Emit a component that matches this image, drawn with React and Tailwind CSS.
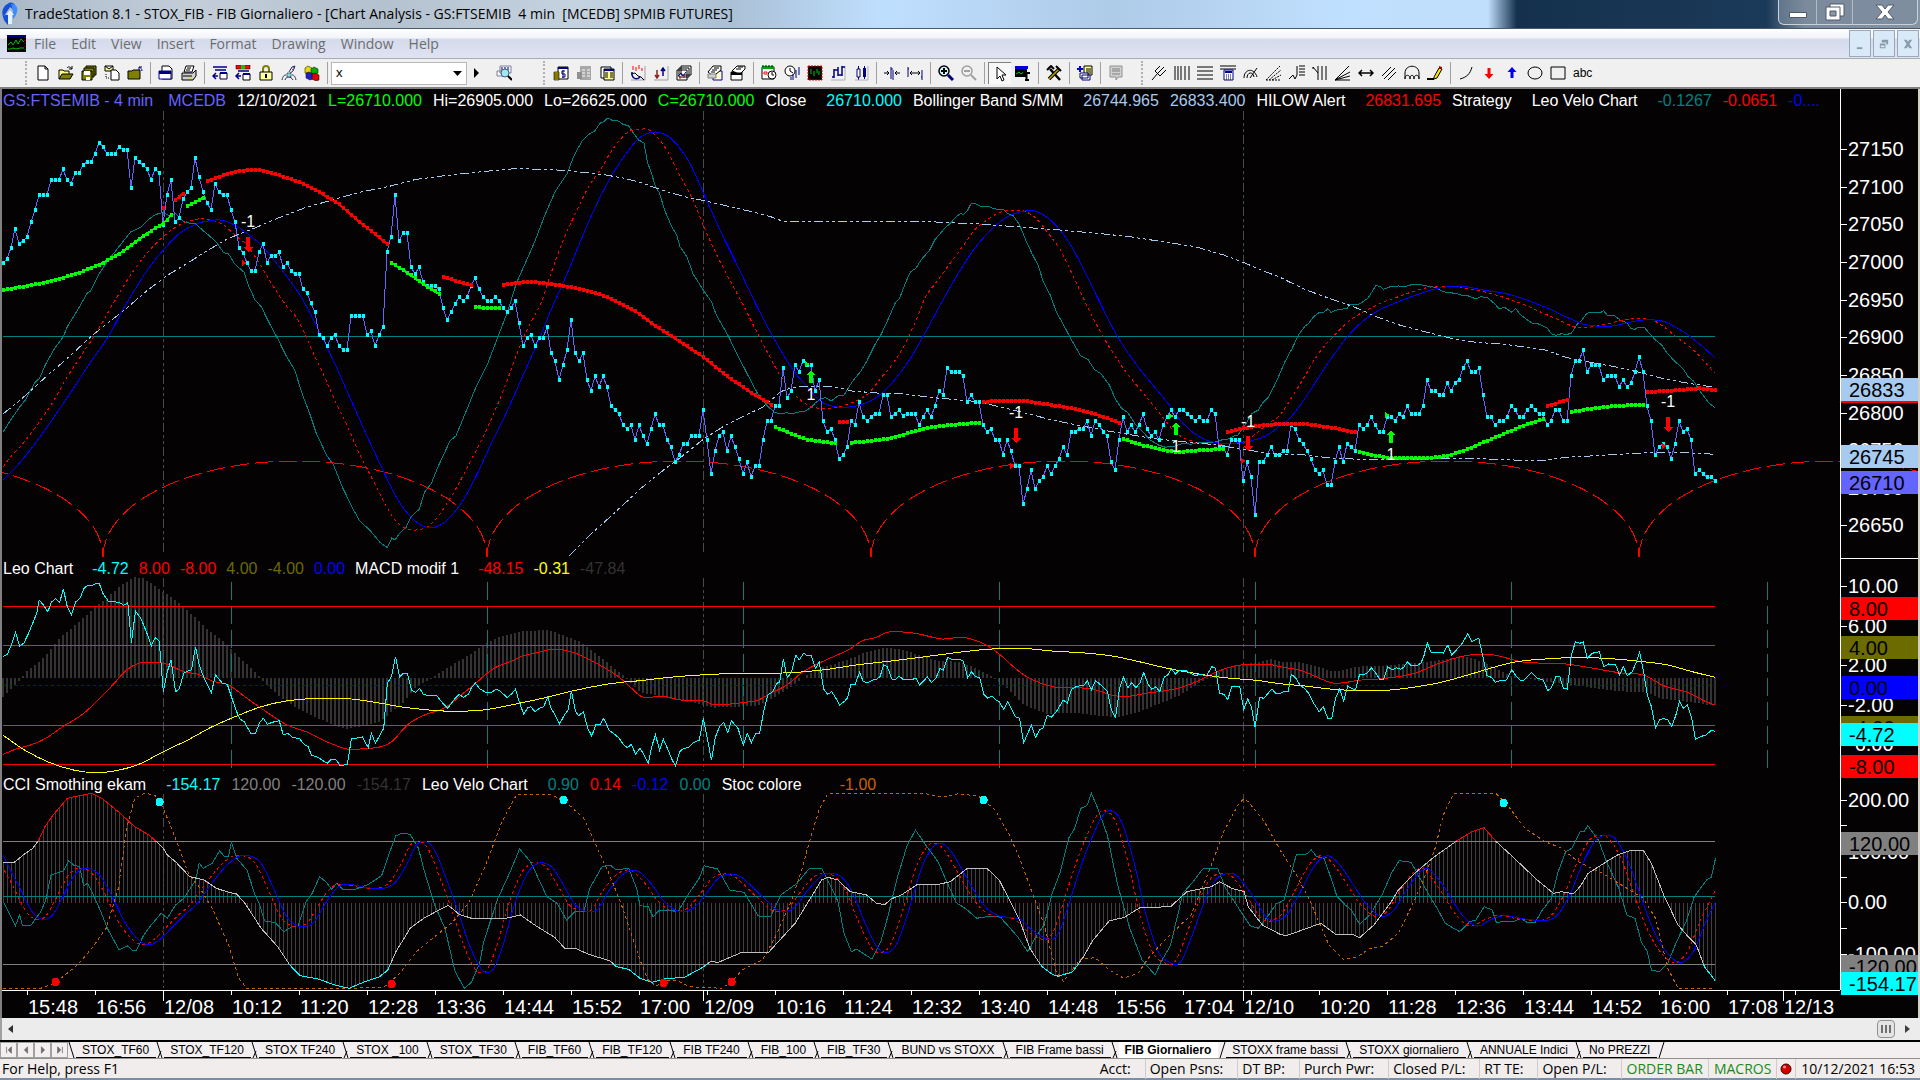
import clsx from "clsx";

// Series are stored in three sheets of 640px each, on a fine grid (2.45 x 3 units per pixel)
const read = (top, ...sheets) =>
  sheets.flatMap((sheet, i) =>
    sheet
      .split(" ")
      .filter(Boolean)
      .map((pair) => {
        const [x, y] = pair.split(",").map(Number);
        return [i * 640 + x / 2.45, top + y / 3];
      })
  );

const fmt = (n) => n.toFixed(1);
const polyline = (pts) => "M" + pts.map(([x, y]) => `${fmt(x)} ${fmt(y)}`).join("L");

// Catmull-Rom through the points
const curve = (pts) => {
  let d = `M${fmt(pts[0][0])} ${fmt(pts[0][1])}`;
  for (let i = 0; i < pts.length - 1; i++) {
    const a = pts[i - 1] || pts[i];
    const b = pts[i];
    const c = pts[i + 1];
    const e = pts[i + 2] || c;
    d += `C${fmt(b[0] + (c[0] - a[0]) / 6)} ${fmt(b[1] + (c[1] - a[1]) / 6)} ${fmt(c[0] - (e[0] - b[0]) / 6)} ${fmt(c[1] - (e[1] - b[1]) / 6)} ${fmt(c[0])} ${fmt(c[1])}`;
  }
  return d;
};

// One sample every 4px (one bar)
const sample = (pts) => {
  const out = [];
  let j = 0;
  for (let x = 3; x <= pts[pts.length - 1][0] + 1; x += 4) {
    if (x < pts[0][0] - 1) continue;
    while (j < pts.length - 2 && pts[j + 1][0] < x) j++;
    const [x0, y0] = pts[j];
    const [x1, y1] = pts[j + 1];
    out.push([x, y0 + ((y1 - y0) * (x - x0)) / (x1 - x0)]);
  }
  return out;
};

const closes = [
  459, 447, 413, 356, 402, 393, 380, 336, 300, 255, 255, 255, 210, 210, 210, 177, 210, 222, 189, 189, 165, 156, 156, 132,
  98, 110, 132, 132, 132, 110, 119, 119, 234, 143, 156, 165, 177, 210, 177, 189, 345, 255, 210, 336, 324, 267, 246, 234,
  143, 200, 246, 279, 300, 222, 246, 255, 255, 300, 336, 413, 428, 459, 483, 483, 426, 402, 459, 437, 437, 426, 471, 459,
  483, 492, 492, 538, 550, 580, 606, 675, 684, 708, 684, 675, 708, 720, 720, 618, 618, 618, 618, 675, 663, 708, 675, 651,
  426, 380, 255, 393, 369, 369, 471, 492, 471, 516, 528, 528, 528, 538, 594, 630, 606, 582, 561, 573, 561, 528, 504, 538,
  561, 573, 573, 561, 573, 594, 606, 594, 573, 639, 708, 684, 675, 708, 684, 684, 651, 729, 753, 810, 765, 720, 630, 729,
  753, 729, 810, 843, 798, 831, 798, 831, 888, 900, 912, 945, 957, 945, 990, 945, 978, 1002, 957, 912, 945, 945, 990,
  1011, 1056, 1035, 1002, 1002, 978, 978, 978, 900, 990, 1092, 1023, 978, 966, 1023, 978, 1011, 1047, 1092, 1056, 1101,
  1068, 1068, 990, 933, 933, 888, 888, 774, 864, 843, 765, 786, 752, 765, 765, 843, 810, 933, 966, 957, 990, 1047, 1035,
  1011, 933, 945, 876, 921, 933, 921, 912, 912, 855, 855, 921, 912, 900, 918, 912, 912, 912, 945, 921, 900, 921, 888, 843,
  855, 774, 786, 786, 786, 798, 876, 855, 876, 876, 945, 966, 957, 990, 990, 1035, 990, 1023, 1068, 1068, 1182, 1137,
  1080, 1137, 1113, 1101, 1068, 1092, 1068, 1047, 1011, 1035, 966, 966, 957, 957, 933, 978, 933, 945, 966, 978, 1056,
  1080, 990, 921, 966, 945, 966, 945, 912, 957, 978, 966, 990, 945, 921, 900, 921, 900, 900, 912, 921, 933, 921, 933, 933,
  900, 912, 1011, 1011, 1035, 990, 990, 990, 1113, 1056, 1101, 1215, 1056, 1056, 1035, 1011, 1035, 1035, 1023, 1023, 945,
  957, 990, 1002, 1023, 1047, 1080, 1092, 1080, 1125, 1125, 1056, 1011, 1056, 1002, 1011, 1023, 945, 957, 945, 921, 945,
  966, 966, 921, 921, 933, 912, 921, 888, 912, 912, 912, 888, 810, 843, 843, 855, 855, 819, 843, 819, 810, 774, 753, 786,
  786, 774, 855, 921, 921, 945, 933, 933, 921, 888, 900, 921, 921, 900, 888, 900, 912, 912, 945, 933, 900, 900, 933, 933,
  798, 753, 753, 720, 786, 765, 765, 765, 810, 798, 798, 798, 831, 810, 831, 819, 786, 741, 786, 888, 933, 1035, 1011,
  1002, 1011, 1047, 1002, 933, 966, 957, 990, 1092, 1080, 1092, 1101, 1101, 1113,
].map((y, i) => [3 + i * 4, 110 + y / 3]);

const velo = read(
  110,
  "8,965 25,932 47,893 62,870 85,818 97,805 112,762 135,713 155,680 165,650 190,600 214,549 222,543 240,497 265,450 282,425 298,400 320,366 345,352 362,330 380,314 400,307 415,318 430,310 450,335 465,340 480,342 498,362 520,385 532,400 548,428 560,432 575,462 598,487 610,530 625,570 640,590 660,640 682,690 700,735 722,780 740,850 760,915 775,970 800,1035 817,1065 840,1135 865,1197 880,1230 910,1266 930,1296 949,1313 960,1284 968,1290 980,1268 995,1252 1007,1220 1027,1198 1040,1147 1057,1120 1075,1065 1103,992 1117,978 1140,910 1165,835 1195,760 1220,680 1245,600 1265,520 1285,465 1310,395 1335,315 1360,245 1390,190 1405,140 1425,95 1440,75 1458,62 1470,40 1480,34 1489,24 1500,31 1515,33 1525,42 1540,48 1550,66 1565,91",
  "3,94 10,100 18,155 28,190 38,230 48,250 60,300 78,350 90,375 98,410 115,440 130,492 155,540 175,575 187,615 215,675 235,725 262,790 290,855 310,885 330,908 345,911 360,908 372,912 385,907 405,903 420,892 430,878 445,865 455,863 468,873 485,858 500,855 520,815 540,785 555,755 575,705 590,675 607,630 625,580 636,565 650,520 663,485 675,476 690,448 710,420 722,390 745,357 760,340 775,320 785,311 793,313 803,300 811,281 822,281 833,288 850,288 865,295 880,300 890,298 900,310 915,318 930,345 945,390 960,430 975,465 988,515 1005,555 1020,605 1040,650 1055,685 1080,738 1097,748 1113,778 1130,792 1150,825 1165,868 1180,895 1195,908 1215,945 1235,970 1250,990 1270,1005 1287,1012 1310,1008 1330,1000 1350,1003 1365,998 1385,996 1405,998 1425,990 1440,988 1455,978 1465,975 1480,950 1500,910 1515,900 1525,880 1540,860 1553,830",
  "0,790 12,755 30,715 45,675 60,650 70,640 82,620 95,608 108,606 117,596 125,607 140,600 165,595 172,582 180,583 195,582 215,565 235,527 245,529 254,538 270,530 290,528 310,529 325,523 345,524 360,528 380,532 400,545 415,548 430,550 445,556 460,557 480,567 492,560 508,563 525,580 537,597 550,592 568,607 577,595 588,613 600,624 618,640 632,641 655,655 665,671 677,676 690,671 700,674 714,670 728,643 740,630 752,610 765,607 785,608 793,602 802,616 820,617 835,632 850,638 860,656 870,658 878,652 893,653 905,670 920,690 935,705 950,732 970,757 988,777 1000,800 1013,813 1030,845 1050,878 1066,893"
);

const veloRed = read(
  110,
  "8,1070 30,1035 60,995 95,938 130,875 165,800 200,735 240,660 280,575 320,495 360,430 400,380 440,345 480,328 510,328 545,343 580,380 605,405 630,450 665,520 700,585 725,620 750,680 770,735 795,800 820,870 850,945 880,1030 905,1090 930,1150 950,1197 975,1240 1000,1257 1020,1260 1045,1252 1070,1225 1095,1180 1120,1130 1150,1060 1180,990 1210,910 1240,820 1270,720 1295,650 1325,580 1350,490 1380,390 1410,310 1440,235 1470,180 1500,120 1530,75 1550,60",
  "0,58 20,59 45,85 70,130 95,190 130,270 160,360 190,440 220,510 255,590 290,675 320,745 350,810 380,855 410,885 440,895 470,895 500,886 530,872 560,850 590,805 620,760 650,700 680,620 700,560 730,510 760,460 790,410 820,360 850,330 880,308 910,301 940,303 970,325 1000,370 1030,420 1060,495 1100,600 1135,680 1170,750 1200,800 1240,860 1280,920 1310,965 1345,990 1390,1003 1430,1002 1470,1000 1490,990 1510,970 1540,940",
  "0,915 30,860 60,800 95,730 130,680 170,632 210,602 250,578 290,560 330,543 370,531 415,529 460,537 500,545 550,563 600,585 640,607 680,628 720,650 750,653 800,642 850,628 880,625 910,629 940,650 970,680 1010,717 1040,755 1066,790"
);

const veloBlue = read(
  110,
  "8,1109 40,1070 80,1010 130,925 180,835 220,760 265,680 305,590 340,520 370,465 400,420 440,370 480,342 520,331 545,331 575,345 600,365 640,405 665,440 700,495 740,565 780,660 820,760 860,870 900,980 940,1085 975,1170 1010,1225 1040,1250 1070,1250 1100,1225 1135,1170 1170,1090 1200,1010 1240,910 1280,800 1320,690 1350,600 1390,490 1420,400 1455,300 1490,215 1520,155 1550,105",
  "0,82 25,68 50,68 80,90 120,155 165,275 200,370 240,470 285,585 330,690 375,780 410,830 440,872 470,888 500,892 540,885 580,862 620,815 660,750 700,665 740,575 780,490 820,415 860,360 900,320 940,304 970,304 1010,335 1050,395 1090,485 1130,585 1170,680 1220,770 1260,830 1300,890 1330,940 1370,980 1410,998 1470,998 1520,985 1550,965",
  "0,945 20,930 50,885 80,830 120,755 165,680 200,637 240,602 290,575 340,552 380,537 420,529 460,531 500,541 550,550 600,568 660,597 700,620 740,641 780,649 820,647 860,636 900,629 940,634 970,652 1000,675 1040,715 1066,744"
);

const bandTop = read(
  110,
  "8,911 50,870 110,803 165,745 230,672 310,595 360,542 410,496 460,459 510,420 560,385 620,356 680,325 750,292 820,268 880,247 950,230 1020,208 1090,197 1180,185 1260,176 1340,178 1400,183 1480,194 1530,205",
  "0,217 60,243 110,260 165,274 220,290 280,307 320,320 350,334 690,334 760,338 830,342 920,350 1020,359 1120,370 1200,380 1290,397 1360,410 1430,435 1480,458 1530,484",
  "0,502 60,538 120,565 180,590 240,622 290,644 350,664 420,685 480,697 550,703 600,711 650,720 700,742 760,757 820,770 880,787 940,806 1000,820 1066,832"
);

const bandLow = read(
  110,
  "1395,1337 1450,1270 1500,1215 1545,1164",
  "0,1137 60,1078 100,1042 155,988 210,945 260,915 300,892 345,845 370,833 410,829 470,829 520,843 580,849 640,851 720,863 830,875 880,890 940,908 1010,930 1080,947 1150,964 1200,974 1260,986 1330,995 1400,1003 1470,1016 1530,1028",
  "0,1034 60,1035 130,1045 200,1048 320,1048 450,1045 530,1048 590,1051 650,1051 700,1042 760,1038 840,1032 900,1028 950,1026 1000,1028 1066,1033"
);

const hilowGreen = [
  read(110, "8,540 50,531 100,520 150,505 200,485 250,460 300,425 340,388 370,362 400,340 420,315"),
  read(110, "459,288 498,263"),
  read(110, "959,459 1000,490 1040,525 1076,552"),
  read(110, "1164,591 1184,594 1223,594"),
  read(110, "", "331,951 370,972 410,989 450,996 480,1000"),
  read(110, "", "518,998 560,994 610,986 660,968 710,952 760,945 831,938"),
  read(110, "", "1184,987 1230,1006 1280,1020 1320,1026 1370,1021 1429,1016"),
  read(110, "", "", "194,1025 230,1037 270,1044 370,1044 410,1037 450,1022 500,996 550,970 600,945 648,926"),
  read(110, "", "", "714,906 760,896 820,888 895,884"),
];

const hilowRed = [
  read(110, "400,295 402,295"),
  read(110, "429,270 449,250"),
  read(110, "508,213 540,198 580,184 620,179 640,180 680,195 730,215 780,245 830,282 880,335 949,402"),
  read(110, "1086,500 1120,515 1155,526"),
  read(
    110,
    "1233,524 1262,519 1300,515 1370,525 1440,542 1500,567 1566,611",
    "40,650 92,690 157,743 212,798 272,848 322,885"
  ),
  read(110, "", "488,936 508,936"),
  read(110, "", "841,876 870,872 940,873 1000,884 1060,896 1120,915 1174,938"),
  read(110, "", "1439,966 1490,952 1530,945", "8,942 60,942 120,952 188,968"),
  read(110, "", "", "655,888 680,878 708,868"),
  read(110, "", "", "900,846 950,843 1000,838 1030,835 1066,840"),
];

const leo = read(
  555,
  "8,304 18,298 28,270 38,232 48,273 58,265 68,240 80,205 90,175 96,135 106,150 117,170 126,142 136,130 146,143 155,102 165,155 175,180 186,140 196,130 206,100 214,92 224,93 236,84 243,85 252,115 265,138 275,140 292,142 303,151 313,143 322,263 332,168 345,190 358,228 371,272 380,248 390,258 400,410 410,350 419,316 430,410 439,402 450,355 460,348 469,345 479,276 488,330 500,370 518,412 528,360 545,385 557,388 567,425 578,465 588,492 598,500 615,536 626,536 635,505 645,490 655,508 667,502 684,497 694,540 705,535 718,548 733,550 745,568 755,575 763,600 780,608 802,625 812,612 824,615 833,632 851,628 861,552 888,546 902,578 910,535 920,565 931,540 940,520 949,385 959,365 969,305 979,366 988,354 998,354 1008,405 1018,412 1028,400 1037,418 1050,422 1070,422 1085,445 1097,460 1113,433 1125,418 1135,427 1148,418 1155,398 1165,384 1174,400 1190,412 1205,411 1216,403 1225,408 1243,428 1255,415 1263,403 1272,440 1283,478 1293,458 1300,455 1311,470 1321,460 1332,455 1342,425 1350,460 1360,480 1371,506 1383,480 1392,465 1400,408 1410,470 1418,482 1429,470 1440,520 1450,543 1460,508 1470,510 1479,490 1492,525 1505,537 1517,550 1528,570 1537,578 1547,568 1557,597",
  "0,580 10,600 20,625 30,570 38,540 48,585 57,552 68,583 78,612 87,634 97,590 107,580 118,578 130,563 145,556 155,490 165,550 175,615 185,545 195,515 205,502 215,533 224,497 240,520 253,570 263,535 273,563 283,536 293,535 303,470 313,420 325,410 335,385 342,382 351,312 361,368 371,352 382,300 390,315 401,295 410,302 420,302 430,340 439,322 450,403 460,418 470,410 480,430 489,450 500,440 508,430 517,388 527,388 538,352 547,380 558,383 570,375 580,372 588,365 597,330 606,335 617,372 625,375 635,363 645,374 657,375 670,372 676,370 685,390 695,378 704,365 714,383 725,370 735,340 743,345 754,307 765,314 785,314 792,318 803,368 812,350 822,365 832,368 842,417 852,430 862,423 872,435 880,440 891,463 901,440 910,462 920,485 930,490 940,563 950,535 959,510 969,547 979,525 988,518 998,480 1008,487 1020,470 1037,435 1047,445 1057,403 1067,396 1075,393 1087,392 1096,377 1106,405 1116,377 1127,388 1145,408 1155,465 1165,487 1175,400 1184,365 1195,398 1205,383 1215,398 1225,383 1234,353 1245,388 1254,403 1264,395 1273,410 1285,365 1293,360 1302,340 1312,358 1322,345 1335,345 1348,355 1360,362 1372,358 1388,362 1401,335 1410,340 1420,415 1430,418 1440,433 1450,395 1460,393 1469,393 1479,463 1489,432 1498,455 1507,517 1518,427 1528,430 1537,418 1548,402 1558,415",
  "0,415 10,410 20,410 28,358 38,368 50,392 60,400 70,415 80,440 96,470 106,455 117,490 127,490 136,430 146,403 156,437 166,393 175,400 185,405 195,358 205,360 215,352 224,338 235,355 245,374 254,372 264,335 275,345 285,338 295,343 303,337 312,320 322,332 335,332 345,325 352,305 361,263 370,292 400,294 411,270 421,300 432,285 445,268 460,236 470,260 487,250 497,305 507,362 518,367 528,382 540,376 555,375 568,345 580,365 590,377 598,375 616,352 630,370 645,375 656,407 665,398 676,365 685,363 694,400 704,402 714,300 724,260 735,265 743,260 753,310 765,295 782,290 793,335 805,327 822,328 832,360 841,335 851,362 863,350 872,325 881,292 890,345 900,420 910,455 920,518 930,495 940,490 950,495 960,514 970,480 979,438 988,460 998,450 1008,485 1018,553 1030,545 1043,540 1058,525 1066,530"
);

const macdBars = read(
  555,
  "8,425 28,400 50,375 60,355 80,335 110,305 150,245 190,205 230,160 270,120 300,88 331,66 350,70 370,85 400,110 430,135 470,178 510,225 550,262 590,310 630,358 650,385 690,430 730,460 780,490 820,512 851,522 890,512 930,500 960,470 990,440 1020,395 1060,368 1100,335 1150,300 1190,265 1230,243 1280,229 1340,224 1380,240 1420,260 1460,295 1500,335 1530,365",
  "0,412 40,420 90,435 140,445 180,458 230,455 290,452 330,425 370,395 410,360 450,335 500,318 550,293 600,278 640,282 680,298 730,318 780,320 820,338 860,362 900,400 940,450 1000,478 1060,472 1110,480 1170,487 1220,472 1270,447 1320,422 1370,385 1410,355 1460,330 1510,322 1550,312",
  "0,320 40,320 80,330 130,350 190,335 250,332 310,326 380,318 420,310 460,306 490,318 520,335 560,360 600,370 640,378 700,388 750,395 800,405 850,410 900,412 930,430 960,435 1000,440 1040,448 1066,450"
);

const macdRed = read(
  555,
  "8,598 40,582 80,568 115,548 150,518 200,480 240,435 280,385 310,345 340,325 380,322 410,328 450,350 485,358 520,378 560,390 600,425 640,460 700,508 750,530 800,560 850,582 890,581 930,576 960,560 1000,508 1040,480 1090,458 1140,410 1165,385 1210,340 1250,320 1280,303 1320,292 1355,283 1400,290 1450,318 1500,352 1530,380",
  "0,422 20,427 60,424 100,435 155,438 180,449 220,447 260,442 290,435 320,415 360,390 400,350 450,318 510,285 545,257 580,247 605,232 635,230 680,236 740,252 790,247 840,265 880,297 910,330 950,367 1010,395 1060,397 1110,403 1155,420 1190,425 1240,415 1310,402 1360,382 1410,352 1460,332 1500,329 1540,328",
  "0,335 50,346 90,366 135,385 200,375 260,370 330,355 390,325 450,303 490,298 530,301 590,320 650,325 700,327 760,338 830,353 890,360 940,392 1000,413 1040,438 1066,450"
);

const macdYellow = read(
  555,
  "8,541 60,585 120,622 180,645 230,653 280,648 340,628 400,590 460,555 520,515 580,483 640,455 700,438 760,431 850,431 910,440 980,455 1060,466 1120,469 1190,464 1260,448 1340,427 1410,406 1480,389 1530,381",
  "0,377 80,366 160,359 240,355 350,354 440,346 530,330 630,316 730,300 830,285 900,280 950,281 1010,288 1100,295 1170,306 1240,325 1300,342 1380,359 1440,369 1510,376",
  "0,386 60,393 130,403 200,407 260,406 320,398 390,383 460,360 520,338 580,320 650,312 740,307 830,313 890,320 950,330 1010,350 1066,367"
);

const cci = read(
  555,
  "8,922 35,922 60,897 80,880 95,855 110,815 130,780 165,730 195,722 225,715 250,730 290,770 330,815 365,840 385,862 400,880 410,900 430,920 465,965 500,975 530,1000 560,1012 580,1017 600,1045 640,1120 680,1175 710,1230 735,1262 780,1272 820,1290 855,1300 890,1282 930,1265 950,1245 970,1190 1005,1120 1040,1088 1098,1051 1125,1078 1160,1092 1240,1090 1275,1080 1310,1110 1360,1148 1385,1182 1410,1180 1440,1197 1495,1218 1510,1235 1540,1243",
  "0,1270 30,1282 60,1272 110,1266 150,1240 175,1218 190,1223 250,1192 315,1192 380,1105 420,1025 445,975 460,967 485,975 515,1010 555,1020 580,1045 600,1049 615,1032 640,1020 680,988 725,990 760,980 800,942 850,940 880,975 905,1035 930,1095 955,1180 985,1235 1010,1258 1025,1264 1060,1250 1085,1208 1110,1155 1150,1097 1185,1088 1225,1058 1300,1055 1340,1010 1400,995 1420,980 1450,1000 1480,1010 1490,1055 1525,1110",
  "0,1138 15,1142 55,1125 100,1105 135,1137 175,1137 195,1148 230,1110 270,1045 290,1005 330,955 375,908 430,860 470,830 500,818 530,860 570,905 630,975 670,1015 690,1010 718,1016 735,995 755,955 800,920 830,898 860,886 890,886 910,925 940,1020 975,1110 1000,1145 1020,1170 1040,1235 1066,1277"
);

const fastVelo = read(
  555,
  "8,1040 38,1112 48,1080 55,1112 75,1112 100,1070 112,1035 125,960 155,948 168,917 180,930 195,935 205,992 215,985 240,1050 265,1125 292,1185 312,1172 325,1187 335,1185 350,1145 365,1118 395,1075 410,1090 430,1050 450,1030 480,975 488,925 498,940 520,925 538,887 550,905 560,903 567,862 580,910 605,945 625,1020 635,1045 648,1098 675,1103 695,1130 715,1115 730,1112 750,1040 765,1015 783,965 800,982 812,1003 825,985 840,1003 865,1005 900,990 935,962 955,890 970,842 985,835 1005,838 1025,880 1040,950 1065,1050 1090,1120 1115,1250 1138,1300 1155,1282 1175,1225 1185,1160 1220,1030 1250,950 1273,882 1300,920 1340,1025 1365,1045 1388,1095 1408,1070 1430,1070 1445,1000 1475,935 1495,930 1510,945 1540,940 1560,1000",
  "0,1052 20,1055 32,1085 48,1065 95,1065 120,1015 145,970 157,932 190,942 220,1005 255,1012 290,1083 320,1085 345,1020 385,985 415,940 445,940 470,1000 485,1040 500,1135 518,1190 530,1182 568,1212 590,1160 607,1085 630,970 655,870 675,825 700,870 730,920 755,990 775,1043 800,1063 825,1090 850,1085 880,1083 900,1110 925,1145 950,1190 970,1145 990,1110 1010,1015 1030,950 1050,850 1065,820 1080,760 1095,752 1106,715 1120,755 1145,840 1170,990 1200,1120 1230,1215 1262,1260 1275,1225 1300,1170 1330,1015 1355,980 1380,940 1415,940 1435,1000 1480,1085 1495,1112 1515,1120 1540,1080 1560,1045",
  "0,1042 10,1035 25,965 40,900 65,897 77,885 90,905 108,910 125,970 140,1025 160,1050 175,1065 195,1108 220,1080 250,1020 275,950 292,917 312,920 322,923 345,975 365,1020 385,1060 405,1105 440,1130 465,1100 480,1095 500,1055 520,1065 530,1102 575,1098 590,1090 605,1102 625,1103 640,1070 665,1030 680,955 700,890 715,880 735,830 745,830 754,812 780,855 800,920 830,1000 850,1080 870,1090 885,1160 900,1190 910,1245 930,1250 950,1225 970,1165 995,1100 1015,1025 1045,975 1057,967 1067,910"
);

const fastBlue = read(
  555,
  "8,900 25,945 45,990 65,1040 85,1080 110,1094 130,1078 150,1035 175,975 195,945 215,940 240,955 260,990 285,1050 310,1110 340,1155 365,1170 390,1155 420,1120 450,1082 480,1050 510,1000 545,945 580,907 610,902 640,925 670,1000 700,1080 720,1107 745,1115 770,1100 800,1040 825,1000 850,987 900,998 940,1000 970,980 1000,920 1020,870 1045,860 1065,885 1090,960 1120,1060 1150,1170 1175,1235 1190,1252 1210,1240 1235,1160 1260,1050 1290,960 1310,930 1330,923 1355,940 1385,1000 1410,1050 1440,1070 1465,1062 1490,1010 1520,965 1545,946",
  "0,952 30,990 60,1040 95,1069 130,1060 160,1020 190,972 220,957 250,968 300,1025 330,1060 355,1070 380,1055 415,1000 445,962 470,955 495,968 520,1010 550,1100 580,1175 605,1193 630,1165 660,1060 690,940 715,880 735,865 760,885 790,945 820,1010 850,1060 880,1083 930,1092 960,1125 1000,1153 1025,1135 1050,1050 1080,935 1110,840 1135,780 1155,768 1180,800 1210,920 1240,1080 1270,1190 1300,1224 1325,1220 1350,1150 1380,1050 1410,975 1440,955 1465,965 1500,1020 1530,1080 1550,1098",
  "0,1094 20,1075 50,1010 80,940 105,907 125,905 150,935 180,990 210,1045 240,1080 260,1082 280,1065 310,1005 340,955 360,940 380,960 410,1010 440,1070 470,1107 490,1112 515,1095 550,1082 600,1092 650,1097 680,1080 710,1020 740,930 770,860 795,841 820,850 850,910 880,1010 910,1110 940,1180 970,1218 990,1220 1015,1185 1040,1110 1067,1040"
);
const fastRed = fastBlue.map(([x, y]) => [x - 6, y]).filter(([x]) => x > 3).concat([[1715, 891]]);

const stoc = read(
  555,
  "8,1300 100,1300 135,1283 190,1230 225,1180 260,1120 290,1000 310,820 330,730 355,714 380,722 400,760 430,850 460,950 490,1000 520,1060 560,1170 585,1270 605,1300 850,1300 940,1297 980,1255 1020,1190 1060,1150 1110,1100 1150,1040 1190,930 1230,800 1265,720 1350,718 1390,745 1430,790 1460,870 1490,950 1520,1040 1545,1130",
  "0,1215 20,1275 40,1293 60,1278 90,1276 120,1295 200,1300 225,1280 250,1245 300,1215 330,1150 370,1040 395,950 415,860 440,760 460,716 700,716 740,726 780,716 830,724 870,765 905,840 930,910 960,1010 990,1110 1020,1250 1038,1280 1055,1250 1080,1212 1115,1208 1150,1245 1185,1270 1220,1255 1245,1210 1290,1150 1350,1080 1400,930 1430,830 1465,750 1478,733 1490,740 1530,800",
  "0,885 40,960 75,1040 95,1100 120,1170 155,1213 190,1205 220,1180 250,1175 290,1135 320,1060 350,980 380,880 400,780 425,716 530,716 560,755 600,820 650,860 690,880 730,920 790,955 850,1000 890,1030 920,1090 950,1240 975,1300 1066,1300"
);

const signals = [
  { x: 248, dir: "down", arrow: 237, label: 227, tip: [244, 263] },
  { x: 811, dir: "up", arrow: 370, label: 400, tip: [807, 364] },
  { x: 1016, dir: "down", arrow: 428, label: 418, tip: [1012, 466] },
  { x: 1176, dir: "up", arrow: 422, label: 452, tip: [1171, 416] },
  { x: 1248, dir: "down", arrow: 436, label: 427, tip: [1243, 461] },
  { x: 1391, dir: "up", arrow: 430, label: 460, tip: [1387, 415] },
  { x: 1668, dir: "down", arrow: 417, label: 407, tip: [1664, 446] },
];

const days = [163.5, 703.5, 1243.5];
const cusps = [-281, 103, 487, 871, 1255, 1639];

const priceLegend = [
  ["GS:FTSEMIB - 4 min", "text-[#6464ff] pr-1"],
  ["MCEDB", "text-[#6464ff]"],
  ["12/10/2021", "text-white"],
  ["L=26710.000", "text-[#00ff00]"],
  ["Hi=26905.000", "text-white"],
  ["Lo=26625.000", "text-white"],
  ["C=26710.000", "text-[#00ff00]"],
  ["Close", "text-white pr-[9px]"],
  ["26710.000", "text-[#00ffff]"],
  ["Bollinger Band S/MM", "text-white pr-[9px]"],
  ["26744.965", "text-[#a6caf0]"],
  ["26833.400", "text-[#a6caf0]"],
  ["HILOW Alert", "text-white pr-[9px]"],
  ["26831.695", "text-[#ff0000]"],
  ["Strategy", "text-white pr-[9px]"],
  ["Leo Velo Chart", "text-white pr-[9px]"],
  ["-0.1267", "text-[#008080]"],
  ["-0.0651", "text-[#ff0000]"],
  ["-0....", "text-[#0000ff]"],
];

const leoLegend = [
  ["Leo Chart", "text-white pr-[9px]"],
  ["-4.72", "text-[#00ffff]"],
  ["8.00", "text-[#ff0000]"],
  ["-8.00", "text-[#ff0000]"],
  ["4.00", "text-[#6b6b00]"],
  ["-4.00", "text-[#6b6b00]"],
  ["0.00", "text-[#0000ff]"],
  ["MACD modif 1", "text-white pr-[9px]"],
  ["-48.15", "text-[#ff0000]"],
  ["-0.31", "text-[#ffff00]"],
  ["-47.84", "text-[#333333]"],
];

const cciLegend = [
  ["CCI Smothing ekam", "text-white pr-[9px]"],
  ["-154.17", "text-[#00ffff]"],
  ["120.00", "text-[#808080]"],
  ["-120.00", "text-[#808080]"],
  ["-154.17", "text-[#333333]"],
  ["Leo Velo Chart", "text-white pr-[9px]"],
  ["0.90", "text-[#008080]"],
  ["0.14", "text-[#ff0000]"],
  ["-0.12", "text-[#0000ff]"],
  ["0.00", "text-[#008080]"],
  ["Stoc colore", "text-white pr-[27px]"],
  ["-1.00", "text-[#c86400]"],
];

const times = [
  [27, "15:48"], [95, "16:56"], [163, "12/08", 1], [231, "10:12"], [299, "11:20"], [367, "12:28"], [435, "13:36"],
  [503, "14:44"], [571, "15:52"], [639, "17:00"], [703, "12/09", 1], [707, ""], [775, "10:16"], [843, "11:24"],
  [911, "12:32"], [979, "13:40"], [1047, "14:48"], [1115, "15:56"], [1183, "17:04"], [1243, "12/10", 1], [1251, ""],
  [1319, "10:20"], [1387, "11:28"], [1455, "12:36"], [1523, "13:44"], [1591, "14:52"], [1659, "16:00"], [1727, "17:08"],
  [1783, "12/13", 1], [1795, ""],
];

const axisTicks = [
  [149, "27150"], [187, "27100"], [224, "27050"], [262, "27000"], [300, "26950"], [337, "26900"], [375, "26850"],
  [413, "26800"], [450, "26750"], [488, "26700"], [525, "26650"], [586, "10.00"], [626, "6.00"], [665, "2.00"],
  [705, "-2.00"], [744, "-6.00"], [800, "200.00"], [825, ""], [852, "100.00"], [877, ""], [902, "0.00"], [928, ""],
  [954, "-100.00"],
];

const axisBoxes = [
  [378, "26833", "#a6caf0"], [445, "26745", "#a6caf0"], [471, "26710", "#6464ff"], [597, "8.00", "#ff0000"],
  [636, "4.00", "#6b6b00"], [676, "0.00", "#0000ff"], [716, "-4.00", "#6b6b00"], [723, "-4.72", "#00ffff"],
  [755, "-8.00", "#ff0000"], [832, "120.00", "#808080"], [955, "-120.00", "#808080"], [972, "-154.17", "#00ffff"],
];

const Legend = ({ items, className }) => (
  <div className={clsx("flex shrink-0 items-center overflow-hidden whitespace-nowrap pl-px pt-0.5 text-base", className)}>
    {items.map(([text, color], i) => (
      <span key={i} className={color}>{text}</span>
    ))}
  </div>
);

const Plot = ({ top, height, label, children }) => (
  <svg
    role="img"
    aria-label={label}
    className="block min-h-0 w-full flex-1 overflow-visible"
    viewBox={`2 ${top} 1838 ${height}`}
    preserveAspectRatio="none"
    fill="none"
    shapeRendering="crispEdges"
  >
    {children}
  </svg>
);

const DayLines = ({ from, to }) => (
  <path d={days.map((x) => `M${x} ${from}V${to}`).join("")} stroke="#4a4a4a" strokeDasharray="9 3 3 3 3 3" />
);

const Dots = ({ runs, color }) =>
  runs.map((run, i) => {
    const dots = sample(run);
    return (
      <g key={i} fill={color}>
        <path d={polyline(dots)} stroke={color} strokeWidth="2" fill="none" />
        {dots.map(([x, y]) => (
          <rect key={x} x={x - 1} y={Math.round(y) - 2} width="3" height="4" />
        ))}
      </g>
    );
  });

const Signal = ({ x, dir, arrow, label, tip }) => {
  const color = dir === "up" ? "#00ff00" : "#ff0000";
  return (
    <g>
      <path
        d={
          dir === "up"
            ? `M${x} ${arrow}l-4 5h2v8h4v-8h2z`
            : `M${x - 2} ${arrow}h4v10h3l-5 5l-5-5h3z`
        }
        fill={color}
      />
      <path d={`M${tip[0] - 2} ${tip[1] - 3}l5 3l-5 3z`} fill={color} />
      <text x={x} y={label} fill="#fff" fontSize="16" textAnchor="middle">{dir === "up" ? "1" : "-1"}</text>
    </g>
  );
};

const PricePane = () => (
  <Plot top={111} height={447} label="Price">
    <DayLines from={111} to={555} />
    <path d="M3 336.500H1715" stroke="#008080" />
    <path
      d={cusps.map((x) => `M${x} 557A192 96 0 0 1 ${x + 384} 557`).join("")}
      stroke="#ff0000"
      strokeDasharray="18 6"
    />
    <path d={polyline(velo)} stroke="#008080" />
    <path d={curve(veloRed)} stroke="#ff0000" strokeDasharray="3 3" />
    <path d={curve(veloBlue)} stroke="#0000ff" />
    <path d={polyline(bandTop)} stroke="#a6caf0" strokeDasharray="9 3 3 3 3 3" />
    <path d={polyline(bandLow)} stroke="#a6caf0" strokeDasharray="9 3 3 3 3 3" />
    <path d={polyline(closes)} stroke="#6464ff" />
    {closes.map(([x, y]) => (
      <rect key={x} x={x - 1} y={Math.round(y) - 2} width="3" height="4" fill="#00ffff" />
    ))}
    <Dots runs={hilowGreen} color="#00ff00" />
    <Dots runs={hilowRed} color="#ff0000" />
    {signals.map((s) => (
      <Signal key={s.x} {...s} />
    ))}
  </Plot>
);

const LeoPane = () => (
  <Plot top={578} height={196} label="Leo Chart and MACD">
    <path d={sample(macdBars).map(([x, y]) => `M${x} 677.500V${fmt(y)}`).join("")} stroke="#333" strokeWidth="2" />
    <DayLines from={578} to={771} />
    <path
      d={[231.5, 487.5, 743.5, 999.5, 1255.5, 1511.5, 1767.5].map((x) => `M${x} 582V768`).join("")}
      stroke="#008080"
      strokeDasharray="18 6"
    />
    <path d="M3 606.500H1715M3 764.500H1715" stroke="#ff0000" />
    <path d="M3 645.500H1715M3 725.500H1715" stroke="#6b6b00" />
    <path d="M3 685.500H1715" stroke="#0000ff" strokeDasharray="3 3" />
    <path d={curve(macdRed)} stroke="#ff0000" />
    <path d={curve(macdYellow)} stroke="#ffff00" />
    <path d={polyline(leo)} stroke="#00ffff" />
  </Plot>
);

const CciPane = () => (
  <Plot top={794} height={196} label="CCI and stochastic">
    <defs>
      <linearGradient id="cci" gradientUnits="userSpaceOnUse" x1="0" y1="794" x2="0" y2="990">
        <stop offset=".241" stopColor="#ff0000" />
        <stop offset=".241" stopColor="#c0c0c0" />
        <stop offset=".869" stopColor="#c0c0c0" />
        <stop offset=".869" stopColor="#00ffff" />
      </linearGradient>
    </defs>
    <path d={sample(cci).map(([x, y]) => `M${x + 0.5} 902.500V${fmt(y)}`).join("")} stroke="#404040" />
    <DayLines from={794} to={988} />
    <path d="M3 841.500H1715M3 964.500H1715" stroke="#808080" />
    <path d="M3 896.500H1715" stroke="#008080" />
    <path d={polyline(fastVelo)} stroke="#008080" />
    <path d={curve(fastRed)} stroke="#ff0000" strokeDasharray="3 3" />
    <path d={curve(fastBlue)} stroke="#0000ff" />
    <path d={polyline(stoc)} stroke="#c86400" strokeDasharray="3 3" />
    <path d={polyline(cci)} stroke="url(#cci)" />
    {[[159.5, 802], [563.5, 800], [983.5, 800], [1503.5, 803]].map(([x, y]) => (
      <rect key={x} x={x - 4} y={y - 4} width="8" height="8" rx="3" fill="#00ffff" />
    ))}
    {[[55.5, 982], [391.5, 984], [663.5, 983], [731.5, 982]].map(([x, y]) => (
      <rect key={x} x={x - 4} y={y - 4} width="8" height="8" rx="3" fill="#ff0000" />
    ))}
  </Plot>
);

const TimeAxis = () => (
  <svg role="img" aria-label="Time axis" className="block h-7 w-full shrink-0" viewBox="2 990 1838 28" preserveAspectRatio="none">
    <path d="M2 990.500H1840" stroke="#fff" />
    {times.map(([x, text, day]) => (
      <g key={x}>
        <path d={`M${x + 0.5} 990V${day ? 1001 : 995}`} stroke="#fff" />
        <text x={x + 1} y="1014" fill="#fff" fontSize="20">{text}</text>
      </g>
    ))}
  </svg>
);

const ValueAxis = () => (
  <svg
    role="img"
    aria-label="Value axis"
    className="block h-full w-20 shrink-0 border-r-2 border-[#d4d0c8]"
    viewBox="1840 89 78 929"
    preserveAspectRatio="none"
  >
    <path d="M1840.500 89V990M1840 558.500H1918" stroke="#fff" />
    {axisTicks.map(([y, text]) => (
      <g key={y}>
        <path d={`M1841 ${y + 0.5}h6`} stroke="#fff" />
        <text x="1848" y={y + 7} fill="#fff" fontSize="20">{text}</text>
      </g>
    ))}
    <path d="M1841 402H1918" stroke="#ff0000" strokeWidth="2" />
    {axisBoxes.map(([y, text, color]) => (
      <g key={y}>
        <rect x="1841" y={y} width="77" height="23" fill={color} />
        <text x="1849" y={y + 19} fill="#000" fontSize="20">{text}</text>
      </g>
    ))}
  </svg>
);

const K = "#000";
const N = "#000080";
const icons = {
  New: <path d="M3 1h7l3 3v11H3zM10 1v3h3" fill="#fff" stroke={K} />,
  Open: <><path d="M1 14V5h4l1 1h5v3" fill="#ffff80" stroke={K} /><path d="M1 14l3-5h11l-3 5z" fill="#808000" stroke={K} /><path d="M9 3c2-2 3-1 5 1M14 1v3h-3" stroke={K} /></>,
  "Save All": <><path d="M5 1h10v9H5z" fill="#808000" stroke={K} /><path d="M3 3h10v9H3z" fill="#808000" stroke={K} /><path d="M1 6h10v9H1z" fill="#808000" stroke={K} /><path d="M3 6h6v4H3zM5 12h4v3H5z" fill="#fff" /></>,
  "Import Document": <><path d="M1 1h8v5H1zl4 3l4-3" fill="#ffffa0" stroke={K} /><path d="M7 5h5l3 3v7H7z" fill="#fff" stroke={K} /><path d="M2 9v4h4" stroke={K} strokeDasharray="1 1" /></>,
  "Close Folder": <><path d="M1 14V6h4l1-1h7v9z" fill="#808000" stroke={K} /><path d="M15 6c0-2-1-3-3-4M12 5V2h3" stroke={N} /></>,
  "Print Preview": <><path d="M4 1h7l3 3v10H4z" fill="#fff" stroke={K} /><path d="M1 6h12v8H1z" fill="#fff" stroke={N} /><path d="M1 6h12v3H1z" fill={N} /></>,
  Print: <><path d="M5 1h8l-2 6H3z" fill="#fff" stroke={K} /><path d="M1 8h11l3-3v6l-3 4H1z" fill="#d0d0d0" stroke={K} /><path d="M2 11h9M6 3h4M5 5h4" stroke={K} /><path d="M8 13h3" stroke="#e0e000" /></>,
  "Insert Analysis": <><path d="M1 2h14M3 5h11" stroke={N} strokeWidth="1.500" /><path d="M8 8h7v6H8z" fill="#fff" stroke={K} /><path d="M8 8h7" stroke={N} strokeWidth="2" /><path d="M6 11H1M4 8l-3 3l3 3" stroke={N} strokeWidth="1.500" /></>,
  "Insert Symbol": <><path d="M1 0h14v4H1z" fill="red" stroke={K} strokeWidth=".5" /><path d="M6 0h4v4H6z" fill="#0c0" /><path d="M3 6h11" stroke={N} strokeWidth="1.500" /><path d="M8 9h7v6H8z" fill="#fff" stroke={K} /><path d="M8 9h7" stroke={N} strokeWidth="2" /><path d="M6 11H1M4 8l-3 3l3 3" stroke={N} strokeWidth="1.500" /></>,
  Lock: <><path d="M5 8V4c0-4 6-4 6 0v4" stroke="#808000" strokeWidth="2" /><path d="M2 7h12v8H2z" fill="#ffffa0" stroke={K} /><path d="M7 9h2v4H7z" fill={K} /></>,
  Satellite: <><path d="M8 7l3-5 3-1-2 5-4 3M1 15c1-4 2-5 4-5M15 15c-1-4-2-5-4-5M4 15c1-4 6-4 8 0" stroke="#303050" /><path d="M6 8h4v4H6z" fill="#80e0f0" stroke={K} strokeWidth=".5" /><path d="M10 3l3 3M11 1l3 3" stroke="#6060c0" /></>,
  Modules: <><path d="M1 3l3-2 4 2v5l-3 2-4-2z" fill="#e8d800" stroke={K} strokeWidth=".5" /><path d="M7 4l3-2 4 2v4l-3 2-4-2z" fill="#00b000" stroke={K} strokeWidth=".5" /><path d="M2 8l3-1 4 2v5l-3 1-4-2z" fill="#2020c0" stroke={K} strokeWidth=".5" /><path d="M8 9l3-1 4 2v5l-3 1-4-2z" fill="#e00000" stroke={K} strokeWidth=".5" /></>,
  "Symbol Lookup": <><path d="M1 6h6v5H1zM4 1h11v7H4z" fill="#f4f4f4" stroke="#8080a0" /><path d="M6 2v3M9 2v3M12 2v3" stroke={N} /><circle cx="9" cy="8" r="4" fill="#a0e8f0" stroke="#406080" /><path d="M12 11l4 4" stroke={K} strokeWidth="2" /></>,
  "Money Data": <><path d="M5 2h10v12H5z" fill="#fff" stroke={K} /><path d="M5 2h10v2H5z" fill={N} /><path d="M12 6h-3v3h3v3H9M10 5v8" stroke={N} /><path d="M1 7h5v8H1zM1 9h5M1 11h5M1 13h5" fill="#c0b000" stroke={K} strokeWidth=".6" /></>,
  "Disabled Data": <><path d="M4 1h11v14H4z" fill="#a8a8a8" /><path d="M6 5h3M11 5h3M6 8h3M11 8h3M6 11h3M11 11h3" stroke="#fff" /><path d="M1 7h5v7H1z" fill="#909090" /></>,
  "Data Sheet": <><path d="M2 2h10v11H2z" fill="#fff" stroke={K} /><path d="M5 4h10v11H5z" fill="#ffff90" stroke={K} /><path d="M5 4h10v2H5z" fill={N} /><path d="M6 8h3M11 8h3M6 10h3M11 10h3M6 12h3M11 12h3" stroke={K} /></>,
  "Draw Tools": <><path d="M15 1v14H1" stroke="#a0a0a0" /><path d="M3 1v4M6 2v4M9 0v4M12 3v3" stroke="red" /><path d="M1 9l4-1 3 3 3 1 3 3" stroke={K} /><path d="M2 7v3c1 4 5 5 8 2" stroke={N} strokeWidth="1.500" /></>,
  "Buy Sell": <><path d="M15 1v14H1" stroke="#a0a0a0" /><path d="M4 5v7M2 10l2 3l2-3" stroke="#902020" strokeWidth="1.500" /><path d="M10 11V4M8 6l2-3l2 3" stroke={N} strokeWidth="1.500" /></>,
  "Chart Pages": <><path d="M5 1h10v9H5zM3 3h10v9H3zM1 5h10v10H1z" fill="#fff" stroke={K} /><path d="M2 11l3-3 2 3 3-4" stroke={N} /><path d="M4 11v3M8 13v-3" stroke="#c00000" /></>,
  "Format Sheet": <><path d="M6 6h9v9H6z" fill="#ffffd0" stroke={N} /><path d="M1 7l5-6h8v4l-5 4-3 2z" fill="#fff" stroke={K} /><path d="M5 5h5M7 3h5M4 7h4" stroke={K} /><path d="M1 9h8v4H1z" fill="#d0d0d0" stroke="#808080" /></>,
  "Format Window": <><path d="M1 7h11v8H1z" fill="#fff" stroke={K} /><path d="M1 7h11v3H1z" fill={K} /><path d="M2 6l5-5h8v3l-4 4H7z" fill="#fff" stroke={K} /><path d="M6 4h5M8 2h5" stroke={K} /></>,
  "Calendar Clock": <><path d="M1 2h12v12H1z" fill="#fff" stroke={K} /><path d="M1 1h12v3H1z" fill="#00a000" /><path d="M2 0v2M5 0v2M8 0v2M11 0v2" stroke={K} /><path d="M3 7h3v2H3z" stroke="red" /><circle cx="11" cy="10" r="4" fill="#fff" stroke={K} /><path d="M11 7v3h2" stroke={K} /></>,
  "Clock Bars": <><circle cx="6" cy="6" r="5" fill="#fff" stroke={K} /><path d="M6 3v3l3 2" stroke={K} /><path d="M9 9v6M12 5v8M15 2v8M7 12v3" stroke={N} /></>,
  "Radar Chart": <><path d="M1 1h14v14H1z" fill={K} stroke="red" strokeDasharray="2 1" /><path d="M4 4v5M7 6v5M10 4v4M12 6v4" stroke="#0c0" /></>,
  "Bar Chart": <><path d="M15 1v14H1" stroke="#b0b0b0" /><path d="M4 4v9M2 12h2M8 2v9M4 5h4M12 1v10M12 2h3M8 10h4" stroke={N} strokeWidth="1.500" /></>,
  Candles: <><path d="M4 4h3v8H4z" fill="#fff" stroke={N} /><path d="M10 3h3v9h-3z" fill={N} /><path d="M5.500 1v3M5.500 12v3M11.500 1v13" stroke={N} /><path d="M15 1v14H2" stroke="#b0b0b0" /></>,
  "Squeeze Bars": <><path d="M0 8h5M3 6l2 2l-2 2M16 8h-5M13 6l-2 2l2 2" stroke={K} /><path d="M7 2v12M9 5v10M7 4h2" stroke={N} /></>,
  "Stretch Bars": <><path d="M3 8h10M5 6L3 8l2 2M11 6l2 2l-2 2" stroke={K} /><path d="M1 2v10M15 5v10M1 4h1M14 12h1" stroke={N} /></>,
  "Zoom In": <><circle cx="6" cy="6" r="5" fill="#d0f8ff" stroke={K} strokeWidth="1.500" /><path d="M6 3v6M3 6h6" stroke={K} strokeWidth="2" /><path d="M10 10l5 5" stroke={N} strokeWidth="3" /></>,
  "Zoom Out": <><circle cx="6" cy="6" r="5" stroke="#a0a0a0" strokeWidth="1.500" /><path d="M3 6h6" stroke="#a0a0a0" strokeWidth="2" /><path d="M10 10l5 5" stroke="#a0a0a0" strokeWidth="2" /></>,
  Pointer: <path d="M5 1v12l3-3 2 5 2-1-2-5h4z" fill="#fff" stroke={K} />,
  "Chart Text": <><path d="M0 1h12v11H0z" fill={K} /><path d="M0 1h13v3H0z" fill="#0000e0" /><path d="M1 9l3-2 2 2 3-2" stroke="#0c0" /><path d="M8 8h7M11.500 8v7M10 15h4" stroke={K} strokeWidth="2" /></>,
  Tools: <><path d="M4 4l10 11" stroke={K} strokeWidth="2.500" /><path d="M13 4L3 14" stroke={K} strokeWidth="3.500" /><path d="M13 4L3 14" stroke="#c0a800" strokeWidth="1.500" /><path d="M10 1l5 5M1 5l4-4 3 3" stroke={K} strokeWidth="2" /></>,
  "Add Sheet": <><path d="M7 1h8v9H7z" fill="#ffff90" stroke={K} /><path d="M9 4h5M9 6h5M9 8h5" stroke={K} /><path d="M3 8h8v5H3zM5 10h8v5H5z" fill="#fff" stroke={N} /><path d="M3 1v6M0 4h6" stroke="#0000e0" strokeWidth="2" /></>,
  Notes: <><path d="M2 1h12v11H10l-2 3V12H2z" fill="#d0d0d0" stroke="#909090" /><path d="M4 4h8M4 6h8M4 9h8" stroke="#808080" /></>,
  Pitchfork: <path d="M1 15l6-7M4 6l5 5M4 6l5-5M7 8l6-6M9 11l6-6" stroke={K} />,
  "Time Lines": <path d="M1 1v14M4 1v14M7 1v14M11 1v14M15 1v14" stroke={K} />,
  "Price Lines": <path d="M0 2h16M0 6h16M0 10h16M0 14h16" stroke={K} />,
  Calculator: <><path d="M0 1h16M0 4h16" stroke={K} /><path d="M4 5h9v10H4z" fill="#fff" stroke={N} /><path d="M5 6h7v2H5z" fill={N} /><path d="M6 10h6M6 12h6M6 14h6" stroke={N} strokeDasharray="1 1" /></>,
  "Speed Arc": <path d="M1 13c0-9 10-11 13-1M4 13c0-6 6-7 7-1M7 13l7-10" stroke={K} />,
  "Fan Dots": <path d="M0 15h15M0 15L14 1M3 15L15 5M6 15l9-5" stroke={K} strokeDasharray="2 1" />,
  Retrace: <path d="M0 14l4-4 2 4 2-4V1M10 1h6M10 4h6M10 7h6M10 10h6" stroke={K} />,
  "Time Extension": <path d="M1 2l5 6M6 1v14M10 1v14M14 1v14M1 2v2" stroke={K} />,
  Fan: <path d="M0 15L14 1M0 15l15-8M0 15l15-4M0 15h15" stroke={K} />,
  Extend: <path d="M1 8h14M4 5L1 8l3 3M12 5l3 3l-3 3" stroke={K} strokeWidth="1.500" />,
  Parallel: <path d="M1 11L10 2M3 14L14 3M7 15l8-8" stroke={K} />,
  Cycles: <path d="M1 14V8c0-9 14-9 14 0v6M1 14c0-5 5-5 5 0c0-5 4-5 4 0c0-5 5-5 5 0" stroke={K} />,
  Trendline: <><path d="M0 14h7" stroke={K} strokeWidth="2" /><path d="M7 12l5-9 3 1-5 9-3 1z" fill="#ffe000" stroke={K} /><path d="M12 1l3 1v2l-3-1z" fill="#c00000" /></>,
  Arc: <path d="M14 2c-2 7-5 10-12 12" stroke={K} />,
  "Down Arrow": <path d="M6.500 3h3v6h3l-4.500 5l-4.500-5h3z" fill="red" />,
  "Up Arrow": <path d="M6.500 13h3V7h3L8 2L3.500 7h3z" fill="#0000ff" />,
  Ellipse: <ellipse cx="8" cy="8" rx="7" ry="6" stroke={K} />,
  Rectangle: <path d="M1 2h14v12H1z" stroke={K} />,
};

const fileTools = [
  "New", "Open", "Save All", "Import Document", "Close Folder", "|", "Print Preview", "Print", "|", "Insert Analysis",
  "Insert Symbol", "Lock", "Satellite", "Modules", "|",
];
const chartTools = [
  "Money Data", "Disabled Data", "Data Sheet", "|", "Draw Tools", "Buy Sell", "Chart Pages", "|", "Format Sheet",
  "Format Window", "|", "Calendar Clock", "Clock Bars", "Radar Chart", "Bar Chart", "Candles", "|", "Squeeze Bars",
  "Stretch Bars", "|", "Zoom In", "Zoom Out", "|", "Pointer", "Chart Text", "|", "Tools", "|", "Add Sheet", "|", "Notes",
];
const drawTools = [
  "Pitchfork", "Time Lines", "Price Lines", "Calculator", "Speed Arc", "Fan Dots", "Retrace", "Time Extension", "Fan",
  "Extend", "Parallel", "Cycles", "Trendline", "|", "Arc", "Down Arrow", "Up Arrow", "Ellipse", "Rectangle",
];

const ToolGroup = ({ names }) =>
  names.map((name, i) =>
    name === "|" ? (
      <span key={i} className="flex w-2 shrink-0 justify-center">
        <span className="h-[22px] w-px bg-[#a0a0a0]" />
      </span>
    ) : (
      <button
        key={i}
        aria-label={name}
        className={clsx(
          "flex h-[22px] w-[23px] shrink-0 items-center justify-center",
          name === "Pointer" && "border-l border-t border-[#808080] bg-[#f8f8f8]"
        )}
      >
        <svg viewBox="0 0 16 16" className="size-4" fill="none">{icons[name]}</svg>
      </button>
    )
  );

const Grip = () => <span className="h-6 w-0.5 shrink-0 border-l-2 border-dotted border-[#b0b0b0]" />;

const TitleBar = () => (
  <header className="flex h-[29px] shrink-0 items-center border-b border-[#4a5a6a] bg-[linear-gradient(90deg,#a9b8c8_0%,#c3ced9_10%,#b4c1ce_20%,#c5d3e0_30%,#aac0d5_38%,#bfdfff_46%,#aecbe8_58%,#c0e0ff_70%,#bfdffc_77.5%,#14304d_79%,#1b3a59_92%,#7a8a9c_94%,#8694a4_100%)]">
    <svg viewBox="0 0 18 24" className="ml-px h-6 w-[18px]">
      <path d="M8 1C2 4 0 9 2 15c1 4 3 6 5 8V11L3 14 9 5l5 4V3c-1-2-4-3-6-2z" fill="#1450d8" />
      <path d="M10 2c5 0 7 3 6 8-1 3-2 5-4 7V9z" fill="#3c8cff" />
      <path d="M9 8l4 5h-2v9H7v-9H5z" fill="#e8f0ff" />
    </svg>
    <h1 className="ml-1.5 flex-1 truncate whitespace-pre font-['Open_Sans',sans-serif] text-sm text-black">
      TradeStation 8.1 - STOX_FIB - FIB Giornaliero - [Chart Analysis - GS:FTSEMIB  4 min  [MCEDB] SPMIB FUTURES]
    </h1>
    <div className="mr-0.5 flex h-[25px] self-start overflow-hidden rounded-b-md border border-t-0 border-[#c8d2dc] bg-[#7c8b9c]/60">
      <button aria-label="Minimize" className="flex w-[38px] items-end justify-center border-r border-[#b0bcc8] pb-1.5">
        <svg viewBox="0 0 18 6" className="h-1.5 w-[18px]"><path d="M.5.5h17v5H.5z" fill="#fff" stroke="#505868" /></svg>
      </button>
      <button aria-label="Restore" className="flex w-9 items-center justify-center border-r border-[#b0bcc8]">
        <svg viewBox="0 0 20 18" className="h-[18px] w-5">
          <path d="M5 1h14v12H5z" fill="#fff" stroke="#505868" />
          <path d="M1 4h14v13H1z" fill="#fff" stroke="#505868" />
          <path d="M5 8h6v5H5z" fill="#8898a8" stroke="#505868" />
        </svg>
      </button>
      <button aria-label="Close" className="flex w-16 items-center justify-center">
        <svg viewBox="0 0 20 16" className="h-4 w-5">
          <path d="M1 1h6l3 4 3-4h6l-6 7 6 7h-6l-3-4-3 4H1l6-7z" fill="#fff" stroke="#505868" />
        </svg>
      </button>
    </div>
  </header>
);

const MenuBar = () => (
  <nav className="flex h-[30px] shrink-0 items-center border-b border-[#a8acb4] bg-[linear-gradient(180deg,#fff_0%,#f2f4fa_30%,#d5dbeb_36%,#dfe3f3_100%)]">
    <svg viewBox="0 0 19 17" className="ml-[7px] h-[17px] w-[19px]">
      <path d="M0 0h19v17H0z" fill="#000" />
      <path d="M0 0h19v2H0z" fill="#000080" />
      <path d="M1 10l3-3 2 3 3-5 2 4 3-5 3 3M1 14h3l2-1 3 1 4-1h4" fill="none" stroke="#00c000" />
      <path d="M18 2v15H0" fill="none" stroke="#c00000" strokeDasharray="1 2" />
    </svg>
    <div className="ml-2 flex flex-1 gap-[15px] font-['Open_Sans',sans-serif] text-sm text-[#6d6d6d]">
      {["File", "Edit", "View", "Insert", "Format", "Drawing", "Window", "Help"].map((m) => (
        <button key={m}>{m}</button>
      ))}
    </div>
    <div className="mr-px flex gap-0.5">
      {[
        ["Minimize chart", "M3 10h6v2H3z"],
        ["Restore chart", "M4 2h7v5H9V5H4zM2 6h6v5H2zM3 8v2h4V8z"],
        ["Close chart", "M2 2h3l1.500 2L8 2h3L8 6.500 11 11H8L6.500 9 5 11H2l3-4.500z"],
      ].map(([name, d]) => (
        <button key={name} aria-label={name} className="flex h-[27px] w-[22px] items-center justify-center border border-[#9aa8b8] bg-[#d9e9f7]">
          <svg viewBox="0 0 13 13" className="size-3"><path d={d} fill="#8a9aaa" fillRule="evenodd" /></svg>
        </button>
      ))}
    </div>
  </nav>
);

const Toolbar = () => (
  <div className="flex h-[30px] shrink-0 items-center overflow-hidden border-b-2 border-[#808080] bg-[#f0f0f0]">
    <span className="w-[25px] shrink-0" />
    <Grip />
    <span className="w-1 shrink-0" />
    <ToolGroup names={fileTools} />
    <div className="flex h-[23px] w-[136px] shrink-0 items-center border border-[#b8b8b8] bg-white">
      <input aria-label="Symbol" defaultValue="x" className="w-full min-w-0 flex-1 bg-transparent px-1 text-[13px] text-black outline-none" />
      <button aria-label="Symbol list" className="px-1">
        <svg viewBox="0 0 9 5" className="h-[5px] w-[9px]"><path d="M0 0h9L4.500 5z" /></svg>
      </button>
    </div>
    <button aria-label="Go" className="flex w-[25px] shrink-0 justify-start pl-[7px]">
      <svg viewBox="0 0 5 10" className="h-2.5 w-[5px]"><path d="M0 0v10l5-5z" /></svg>
    </button>
    <ToolGroup names={["Symbol Lookup"]} />
    <span className="w-7 shrink-0" />
    <Grip />
    <span className="w-1 shrink-0" />
    <ToolGroup names={chartTools} />
    <span className="w-3.5 shrink-0" />
    <Grip />
    <span className="w-1 shrink-0" />
    <ToolGroup names={drawTools} />
    <button aria-label="Text" className="px-1 text-xs text-black">abc</button>
  </div>
);

const ScrollBar = () => (
  <div className="flex h-[22px] shrink-0 items-center border-l-2 border-[#a0a0a0] bg-[#ececec] px-1.5">
    <button aria-label="Scroll left">
      <svg viewBox="0 0 5 8" className="h-2 w-[5px]"><path d="M5 0v8L0 4z" fill="#303030" /></svg>
    </button>
    <span className="flex-1" />
    <button aria-label="Scroll thumb" className="flex h-[18px] w-[18px] items-center justify-center gap-0.5 rounded-sm border border-[#909090] bg-[#e4e4e4]">
      {[0, 1, 2].map((i) => (
        <span key={i} className="h-2 w-0.5 bg-[#707070]" />
      ))}
    </button>
    <button aria-label="Scroll right" className="ml-2.5 mr-1">
      <svg viewBox="0 0 5 8" className="h-2 w-[5px]"><path d="M0 0v8l5-4z" fill="#404040" /></svg>
    </button>
  </div>
);

const tabs = [
  "STOX_TF60", "STOX_TF120", "STOX TF240", "STOX _100", "STOX_TF30", "FIB_TF60", "FIB_TF120", "FIB TF240", "FIB_100",
  "FIB_TF30", "BUND vs STOXX", "FIB Frame bassi", "FIB Giornaliero", "STOXX frame bassi", "STOXX giornaliero",
  "ANNUALE Indici", "No PREZZI",
];

const Slant = ({ d }) => (
  <svg viewBox="0 0 8 16" className="h-4 w-2 shrink-0" fill="none">
    <path d={d} stroke="#000" />
  </svg>
);

const TabStrip = () => (
  <div className="flex h-[19px] shrink-0 items-start overflow-hidden border-b border-t-2 border-b-[#909090] border-t-black bg-[#f3eff0] text-xs text-black">
    {[
      ["First", "M2 1v8M8 1L4 5l4 4z"],
      ["Previous", "M7 1L3 5l4 4z"],
      ["Next", "M3 1l4 4-4 4z"],
      ["Last", "M8 1v8M2 1l4 4-4 4z"],
    ].map(([name, d]) => (
      <button key={name} aria-label={name} className="flex h-4 w-[17px] shrink-0 items-center justify-center border border-[#a0a0a0]">
        <svg viewBox="0 0 10 10" className="size-2"><path d={d} fill="#707070" stroke="#707070" /></svg>
      </button>
    ))}
    <Slant d="M1 0l5 16" />
    {tabs.map((tab, i) => (
      <span key={tab} className="flex shrink-0">
        <button
          className={clsx(
            "h-4 whitespace-nowrap pl-1.5 pr-[7px] leading-4",
            tab === "FIB Giornaliero" ? "bg-white font-bold" : "border-b border-black"
          )}
        >
          {tab}
        </button>
        <Slant d={tab === "FIB Giornaliero" || i === tabs.length - 1 ? "M7 0L2 16" : "M1 0l5 16M5 9l-3 7"} />
      </span>
    ))}
  </div>
);

const StatusBar = () => (
  <footer className="flex h-[21px] shrink-0 items-center border-b-2 border-[#7c8ea4] bg-[#f0edec] pt-px font-['Open_Sans',sans-serif] text-sm leading-5 text-black">
    <span className="flex-1 truncate pl-0.5">For Help, press F1</span>
    {["Acct:", "Open Psns:", "DT BP:", "Purch Pwr:", "Closed P/L:", "RT TE:", "Open P/L:"].map((t) => (
      <span key={t} className="whitespace-nowrap border-r border-[#d0cccc] pl-1 pr-3.5">{t}</span>
    ))}
    <span className="whitespace-nowrap border-r border-[#d0cccc] px-[5px] text-[#1a8a1a]">ORDER BAR</span>
    <span className="whitespace-nowrap border-r border-[#d0cccc] px-[5px] text-[#1a8a1a]">MACROS</span>
    <svg viewBox="0 0 12 12" className="mx-[3px] size-3">
      <circle cx="6" cy="6" r="5" fill="#d00000" stroke="#400000" />
      <circle cx="4.500" cy="4" r="1.500" fill="#ff9090" />
    </svg>
    <span className="whitespace-nowrap border-l border-[#d0cccc] px-[5px]">10/12/2021 16:53</span>
  </footer>
);

const App = () => (
  <div className="flex h-screen min-h-[640px] flex-col overflow-hidden bg-[#f0f0f0] font-['Liberation_Sans',Arial,sans-serif]">
    <TitleBar />
    <MenuBar />
    <Toolbar />
    <main className="flex min-h-0 flex-1 overflow-hidden border-l-2 border-[#808080] bg-[#050203]">
      <div className="flex min-w-0 flex-1 flex-col">
        <section className="flex min-h-0 grow-[469] basis-0 flex-col">
          <Legend items={priceLegend} className="h-[22px] gap-[11px]" />
          <PricePane />
        </section>
        <section className="flex min-h-0 grow-[216] basis-0 flex-col">
          <Legend items={leoLegend} className="h-5 gap-2.5" />
          <LeoPane />
        </section>
        <section className="flex min-h-0 grow-[216] basis-0 flex-col">
          <Legend items={cciLegend} className="h-5 gap-[11px]" />
          <CciPane />
        </section>
        <TimeAxis />
      </div>
      <ValueAxis />
    </main>
    <ScrollBar />
    <TabStrip />
    <StatusBar />
  </div>
);

export default App;
